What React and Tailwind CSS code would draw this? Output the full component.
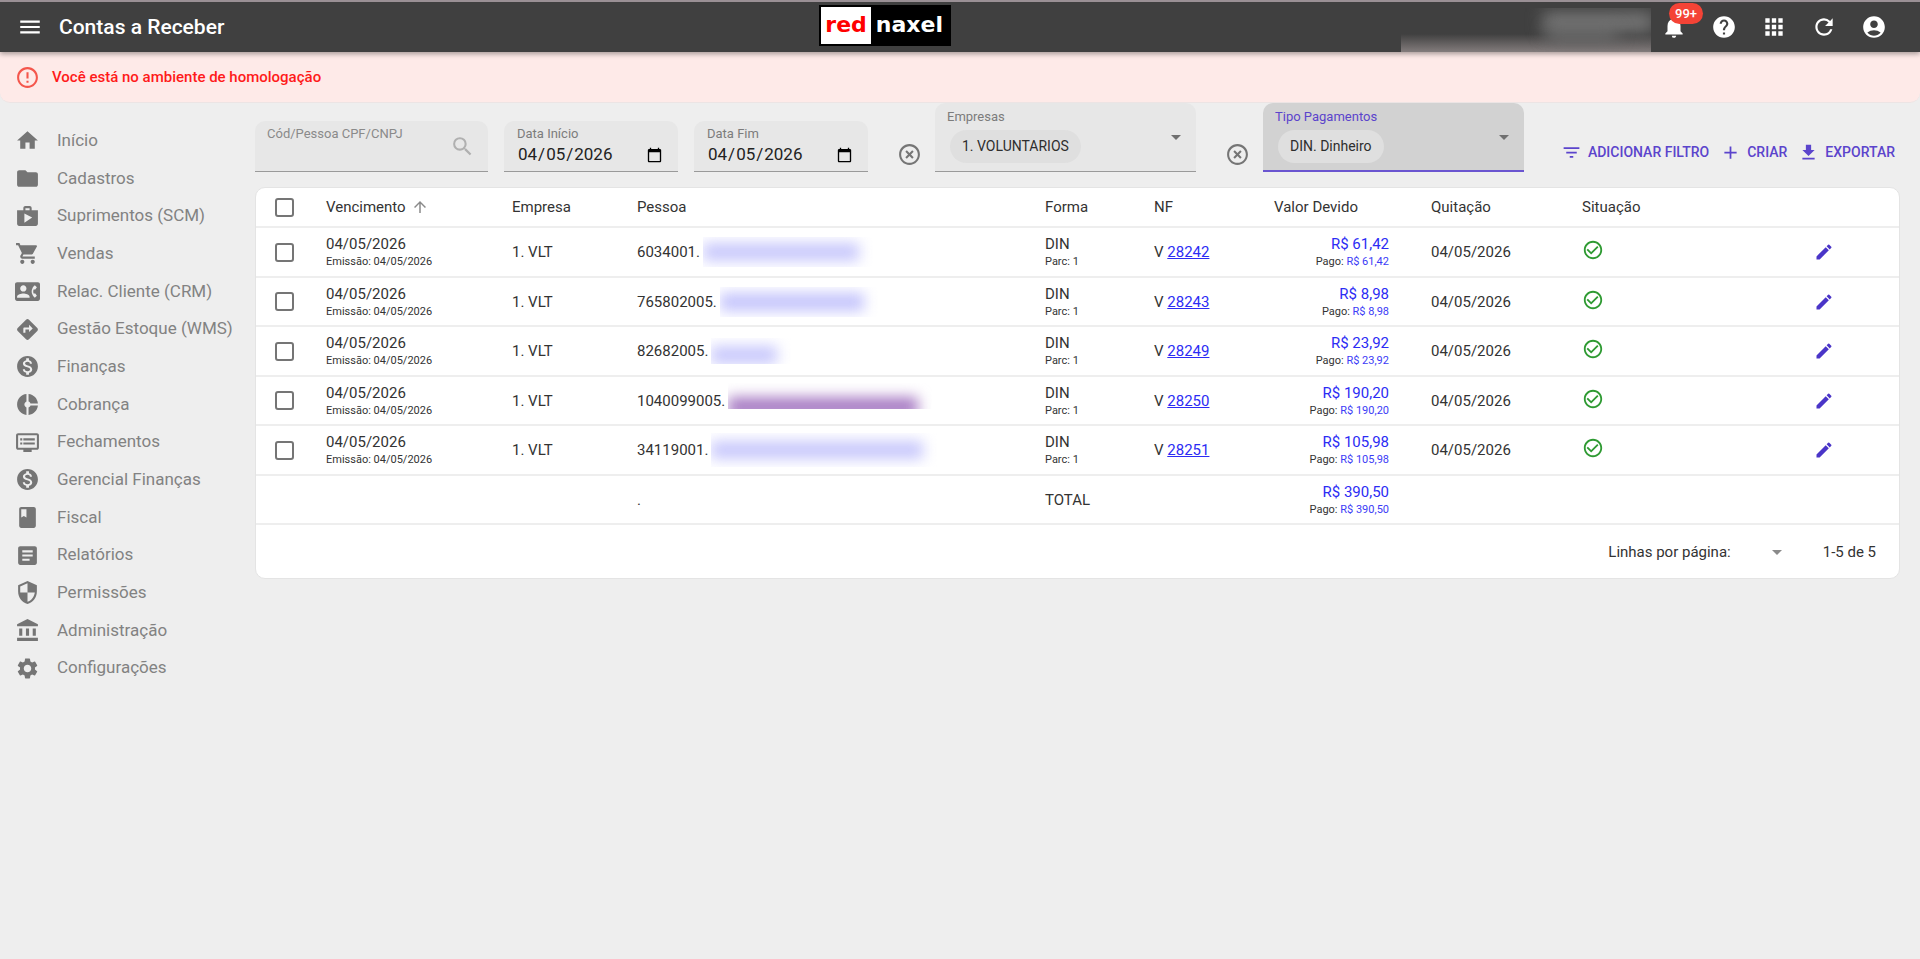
import React, { useState } from 'react';
import {
  MdAccountBalance,
  MdAccountCircle,
  MdAdd,
  MdApps,
  MdArrowDropDown,
  MdArrowUpward,
  MdArticle,
  MdBook,
  MdCheckCircleOutline,
  MdContactPhone,
  MdDirections,
  MdDonutSmall,
  MdDvr,
  MdEdit,
  MdErrorOutline,
  MdFilterList,
  MdFolder,
  MdGetApp,
  MdHelp,
  MdHighlightOff,
  MdHome,
  MdMenu,
  MdMonetizationOn,
  MdNotifications,
  MdRefresh,
  MdSearch,
  MdSecurity,
  MdSettings,
  MdShop,
  MdShoppingCart,
} from 'react-icons/md';

const menuItems = [
  { label: 'Início', icon: MdHome },
  { label: 'Cadastros', icon: MdFolder },
  { label: 'Suprimentos (SCM)', icon: MdShop },
  { label: 'Vendas', icon: MdShoppingCart },
  { label: 'Relac. Cliente (CRM)', icon: MdContactPhone },
  { label: 'Gestão Estoque (WMS)', icon: MdDirections },
  { label: 'Finanças', icon: MdMonetizationOn },
  { label: 'Cobrança', icon: MdDonutSmall },
  { label: 'Fechamentos', icon: MdDvr },
  { label: 'Gerencial Finanças', icon: MdMonetizationOn },
  { label: 'Fiscal', icon: MdBook },
  { label: 'Relatórios', icon: MdArticle },
  { label: 'Permissões', icon: MdSecurity },
  { label: 'Administração', icon: MdAccountBalance },
  { label: 'Configurações', icon: MdSettings },
];

// mask: nome da pessoa fica oculto
const contas = [
  { id: 1, pessoa: '6034001.', nf: '28242', valor: 'R$ 61,42', box: 'w-[170px] h-[30px] items-center', mask: 'w-[156px] h-[18px] bg-[#c8c8fc]' },
  { id: 2, pessoa: '765802005.', nf: '28243', valor: 'R$ 8,98', box: 'w-[160px] h-[30px] items-center', mask: 'w-[144px] h-[18px] bg-[#c4c4fc]' },
  { id: 3, pessoa: '82682005.', nf: '28249', valor: 'R$ 23,92', box: 'w-[80px] h-[26px] items-end', mask: 'w-[66px] h-[18px] bg-[#c8c8fc]' },
  { id: 4, pessoa: '1040099005.', nf: '28250', valor: 'R$ 190,20', box: 'w-[204px] h-[26px] items-end mb-[10px]', mask: 'w-[190px] h-[20px] -mb-2 bg-[#a87cc4]' },
  { id: 5, pessoa: '34119001.', nf: '28251', valor: 'R$ 105,98', box: 'w-[226px] h-[34px] items-center', mask: 'w-[212px] h-[18px] bg-[#c8c8fc]' },
];

function Header() {
  return (
    <header className="relative z-10 flex h-[52px] items-center justify-between border-t-2 border-[#9a9095] bg-[#404040] pl-[17px] pr-[33px] text-white shadow-[0_2px_5px_rgba(0,0,0,0.35)]">
      <div className="flex flex-6 items-center gap-4">
        <button aria-label="Menu">
          <MdMenu className="size-[26px]" />
        </button>
        <h1 className="text-[21px] font-medium leading-6">Contas a Receber</h1>
      </div>

      <div className="mb-1 flex h-[41px] border-2 border-black bg-black font-['DejaVu_Sans',sans-serif] text-[22px] font-bold leading-9">
        <span className="bg-white px-1 text-[#ff0000]">red</span>
        <span className="pl-[5px] pr-[6px]">naxel</span>
      </div>

      <div className="flex flex-7 items-center justify-end gap-6">
        <div className="relative -mb-[6px] -mr-[14px] h-[44px] w-[250px] overflow-hidden">
          <div className="absolute inset-x-0 bottom-0 h-[18px] bg-linear-to-b from-transparent to-[#837c7c]"></div>
          <div className="absolute left-[142px] top-1 h-5 w-[110px] bg-[#767676] blur-[8px]"></div>
          <div className="absolute left-[146px] top-5 h-3 w-[70px] bg-[#707070] blur-[8px]"></div>
        </div>
        <button aria-label="Notificações" className="relative">
          <MdNotifications className="size-[26px]" />
          <span className="absolute -top-[11px] left-[8px] rounded-full bg-[#f44336] px-[6px] text-[13px] font-medium leading-[21px]">99+</span>
        </button>
        <button aria-label="Ajuda"><MdHelp className="size-[26px]" /></button>
        <button aria-label="Aplicativos"><MdApps className="size-[26px]" /></button>
        <button aria-label="Atualizar"><MdRefresh className="size-[26px]" /></button>
        <button aria-label="Conta"><MdAccountCircle className="size-[26px]" /></button>
      </div>
    </header>
  );
}

function Sidebar() {
  return (
    <nav className="w-[255px] shrink-0 pt-[19px]">
      <ul className="grid h-[565px] auto-rows-fr">
        {menuItems.map(({ label, icon: Icon }) => (
          <li key={label} className="flex">
            <a href="#" className="flex flex-1 items-center gap-[17px] pl-[15px] text-[17px] text-[#828282]">
              <Icon className="size-[25px] text-[#757575]" />
              {label}
            </a>
          </li>
        ))}
      </ul>
    </nav>
  );
}

function DateField({ id, label }) {
  return (
    <div className="h-[51px] w-[174px] rounded-t-[10px] border-b border-[#9a9a9a] bg-[#e7e7e7] px-[13px] pt-1">
      <label htmlFor={id} className="block text-[13px] leading-[18px] text-[#7c7c7c]">{label}</label>
      <input id={id} type="date" defaultValue="2026-04-05" className="block h-6 w-full text-[17px] text-[#222] outline-none" />
    </div>
  );
}

function ChipSelect({ id, label, option, active }) {
  return (
    <div className={`flex h-[69px] w-[261px] items-center justify-between rounded-t-[10px] pl-3 pr-2 ${active ? 'border-b-2 border-[#6a55d0] bg-[#d2d2d2]' : 'border-b border-[#9a9a9a] bg-[#e7e7e7]'}`}>
      <div className="self-start pt-1">
        <label htmlFor={id} className={`block text-[13px] leading-5 ${active ? 'text-[#5b44cc]' : 'text-[#7c7c7c]'}`}>{label}</label>
        <select id={id} className="ml-[3px] mt-[3px] block h-[33px] appearance-none rounded-full bg-[#dfdfdf] px-3 text-[14px] text-[#2e2e2e] outline-none">
          <option>{option}</option>
        </select>
      </div>
      <MdArrowDropDown className="size-6 text-[#707070]" />
    </div>
  );
}

function ClearButton({ label }) {
  return (
    <button aria-label={label} className="mb-[5px] ml-[29px] mr-[13px] text-[#757575]">
      <MdHighlightOff className="size-[25px]" />
    </button>
  );
}

function Filters() {
  return (
    <div className="flex items-end">
      <div className="flex h-[51px] w-[233px] items-center rounded-t-[10px] border-b border-[#9a9a9a] bg-[#e7e7e7] pl-3 pr-[13px]">
        <div className="min-w-0 flex-1 self-start pt-1">
          <label htmlFor="pessoa" className="block whitespace-nowrap text-[13px] leading-[18px] text-[#8a8a8a]">Cód/Pessoa CPF/CNPJ</label>
          <input id="pessoa" type="text" className="block h-6 w-full text-[17px] outline-none" />
        </div>
        <MdSearch className="size-[25px] text-[#b0b0b0]" />
      </div>
      <div className="ml-4 flex gap-4">
        <DateField id="inicio" label="Data Início" />
        <DateField id="fim" label="Data Fim" />
      </div>
      <ClearButton label="Limpar empresas" />
      <ChipSelect id="empresas" label="Empresas" option="1. VOLUNTARIOS" />
      <ClearButton label="Limpar tipo pagamentos" />
      <ChipSelect id="tipo" label="Tipo Pagamentos" option="DIN. Dinheiro" active />
      <div className="mb-1 ml-auto flex gap-[11px] pr-[5px] text-[14px] font-medium text-[#5b44cc]">
        <button className="flex h-8 items-center gap-[6px]"><MdFilterList className="size-[21px]" />ADICIONAR FILTRO</button>
        <button className="flex h-8 items-center gap-[6px]"><MdAdd className="size-[21px]" />CRIAR</button>
        <button className="flex h-8 items-center gap-[6px]"><MdGetApp className="size-[21px]" />EXPORTAR</button>
      </div>
    </div>
  );
}

function Checkbox({ label, checked, onChange }) {
  return (
    <input
      type="checkbox"
      aria-label={label}
      checked={checked}
      onChange={onChange}
      className="ml-[19px] block size-[19px] appearance-none rounded-[3px] border-2 border-[#757575] checked:bg-[#5b44cc]"
    />
  );
}

function Valor({ valor }) {
  return (
    <td className="pr-[42px] text-right">
      <div className="text-[#2c2cf4]">{valor}</div>
      <div className="text-[11px] leading-4">Pago: <span className="text-[#3c3cf6]">{valor}</span></div>
    </td>
  );
}

function ContasTable() {
  const [selected, setSelected] = useState([]);

  const toggle = (id) => {
    setSelected(prev => prev.includes(id) ? prev.filter(i => i !== id) : [...prev, id]);
  };

  const toggleAll = () => {
    setSelected(selected.length === contas.length ? [] : contas.map(c => c.id));
  };

  return (
    <div className="mt-[15px] rounded-[10px] border border-[#e4e4e4] bg-white text-[15px] leading-5 text-[#333]">
      <table className="w-full table-fixed text-left">
        <colgroup>
          <col className="w-[70px]" />
          <col className="w-[186px]" />
          <col className="w-[125px]" />
          <col />
          <col className="w-[109px]" />
          <col className="w-[120px]" />
          <col className="w-[157px]" />
          <col className="w-[151px]" />
          <col className="w-[232px]" />
          <col className="w-[85px]" />
        </colgroup>
        <thead>
          <tr className="h-[39px] border-b-2 border-[#eee] *:font-normal">
            <th><Checkbox label="Selecionar todas" checked={selected.length === contas.length} onChange={toggleAll} /></th>
            <th>
              <button className="flex items-center gap-[5px]">Vencimento <MdArrowUpward className="size-[18px] text-[#8a8a8a]" /></button>
            </th>
            <th>Empresa</th>
            <th>Pessoa</th>
            <th>Forma</th>
            <th>NF</th>
            <th>Valor Devido</th>
            <th>Quitação</th>
            <th>Situação</th>
            <th></th>
          </tr>
        </thead>
        <tbody>
          {contas.map(conta => (
            <tr key={conta.id} className="border-b-2 border-[#eee] odd:h-[50px] even:h-[49px]">
              <td><Checkbox label={`Selecionar NF ${conta.nf}`} checked={selected.includes(conta.id)} onChange={() => toggle(conta.id)} /></td>
              <td>
                <div>04/05/2026</div>
                <div className="text-[11px] leading-4">Emissão: 04/05/2026</div>
              </td>
              <td>1. VLT</td>
              <td>
                <div className="flex h-9 items-center gap-[3px]">
                  {conta.pessoa}
                  <div className={`flex justify-start overflow-hidden ${conta.box}`}>
                    <div className={`blur-[7px] ${conta.mask}`}></div>
                  </div>
                </div>
              </td>
              <td>
                <div>DIN</div>
                <div className="text-[11px] leading-4">Parc: 1</div>
              </td>
              <td>V <a href="#" className="text-[#2c2cf4] underline">{conta.nf}</a></td>
              <Valor valor={conta.valor} />
              <td>04/05/2026</td>
              <td><MdCheckCircleOutline className="mb-1 size-[22px] text-[#2e9a32]" title="Quitado" /></td>
              <td>
                <button aria-label="Editar" className="block text-[#4a35c8]"><MdEdit className="size-5" /></button>
              </td>
            </tr>
          ))}
          <tr className="h-[49px] border-b-2 border-[#eee]">
            <td></td>
            <td></td>
            <td></td>
            <td>.</td>
            <td>TOTAL</td>
            <td></td>
            <Valor valor="R$ 390,50" />
            <td></td>
            <td></td>
            <td></td>
          </tr>
        </tbody>
      </table>
      <div className="flex h-[53px] items-center justify-end pr-[23px]">
        <label htmlFor="linhas">Linhas por página:</label>
        <div className="ml-4 flex items-center">
          <select id="linhas" className="h-6 w-[18px] appearance-none outline-none">
            <option></option>
          </select>
          <MdArrowDropDown className="size-6 text-[#8a8a8a]" />
        </div>
        <span className="ml-[34px]">1-5 de 5</span>
      </div>
    </div>
  );
}

function App() {
  return (
    <div className="min-h-screen bg-[#eeeeee] font-[Roboto,sans-serif]">
      <Header />
      <div role="alert" className="flex h-[51px] items-center gap-3 rounded-b-[10px] border-b border-[#ece4e4] bg-[#feeae8] pl-[15px] text-[15px] font-medium text-[#ff1a1a]">
        <MdErrorOutline className="size-[25px] text-[#f4564c]" />
        Você está no ambiente de homologação
      </div>
      <div className="flex">
        <Sidebar />
        <main className="min-w-0 flex-1 pr-5">
          <Filters />
          <ContasTable />
        </main>
      </div>
    </div>
  );
}

export default App;
